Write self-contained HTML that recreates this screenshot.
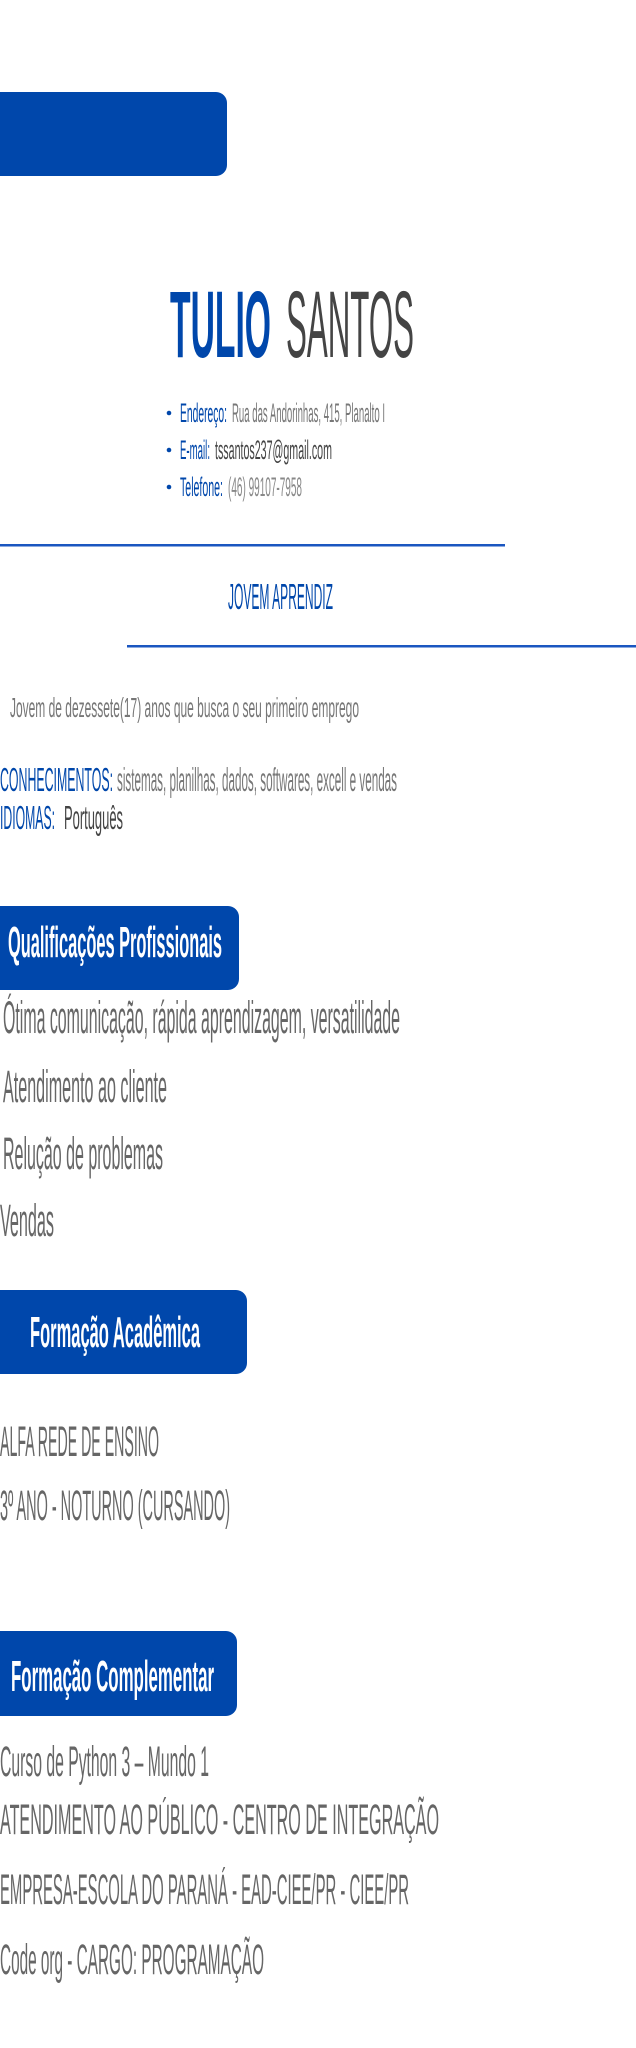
<!DOCTYPE html>
<html><head><meta charset="utf-8"><style>
html,body{margin:0;padding:0;background:#fff;}
svg{display:block;}
text{font-family:"Liberation Sans",sans-serif;}
</style></head><body>
<svg width="636" height="2048" viewBox="0 0 636 2048" xmlns="http://www.w3.org/2000/svg">
<rect width="636" height="2048" fill="#fff"/>
<path d="M0 92 H216 a11 11 0 0 1 11 11 V165 a11 11 0 0 1 -11 11 H0 Z" fill="#0047AB"/>
<text x="170" y="357" font-size="95" font-weight="bold" fill="#0047AB" textLength="101" lengthAdjust="spacingAndGlyphs">TULIO</text>
<text x="286" y="357" font-size="95" fill="#444" textLength="128" lengthAdjust="spacingAndGlyphs">SANTOS</text>
<circle cx="169" cy="413" r="2.3" fill="#0047AB"/>
<circle cx="169" cy="450" r="2.3" fill="#0047AB"/>
<circle cx="169" cy="487" r="2.3" fill="#0047AB"/>
<text x="180" y="422" font-size="27" fill="#0047AB" textLength="47" lengthAdjust="spacingAndGlyphs">Endereço:</text>
<text x="232" y="422" font-size="27" fill="#777" textLength="153" lengthAdjust="spacingAndGlyphs">Rua das Andorinhas, 415, Planalto I</text>
<text x="180" y="459" font-size="27" fill="#0047AB" textLength="30" lengthAdjust="spacingAndGlyphs">E-mail:</text>
<text x="215" y="459" font-size="27" fill="#444" textLength="117" lengthAdjust="spacingAndGlyphs">tssantos237@gmail.com</text>
<text x="180" y="496" font-size="27" fill="#0047AB" textLength="43" lengthAdjust="spacingAndGlyphs">Telefone:</text>
<text x="228" y="496" font-size="27" fill="#888" textLength="74" lengthAdjust="spacingAndGlyphs">(46) 99107-7958</text>
<rect x="0" y="544" width="505" height="2.5" fill="#1a56c0"/>
<text x="228" y="609" font-size="36" fill="#0047AB" textLength="105" lengthAdjust="spacingAndGlyphs">JOVEM APRENDIZ</text>
<rect x="127" y="645" width="509" height="2.5" fill="#1a56c0"/>
<text x="10" y="717" font-size="28" fill="#777" textLength="349" lengthAdjust="spacingAndGlyphs">Jovem de dezessete(17)  anos que busca o seu primeiro emprego</text>
<text x="0" y="791" font-size="33" fill="#0047AB" textLength="113" lengthAdjust="spacingAndGlyphs">CONHECIMENTOS:</text>
<text x="117" y="791" font-size="33" fill="#777" textLength="280" lengthAdjust="spacingAndGlyphs">sistemas, planilhas, dados, softwares, excell e vendas</text>
<text x="0" y="829" font-size="33" fill="#0047AB" textLength="55" lengthAdjust="spacingAndGlyphs">IDIOMAS:</text>
<text x="64" y="829" font-size="33" fill="#444" textLength="59" lengthAdjust="spacingAndGlyphs">Português</text>
<path d="M0 906 H228 a11 11 0 0 1 11 11 V979 a11 11 0 0 1 -11 11 H0 Z" fill="#0047AB"/>
<text x="8" y="957" font-size="44" font-weight="bold" fill="#fff" textLength="214" lengthAdjust="spacingAndGlyphs">Qualificações Profissionais</text>
<g font-size="45" fill="#666">
<text x="3" y="1033" textLength="397" lengthAdjust="spacingAndGlyphs">Ótima comunicação, rápida aprendizagem, versatilidade</text>
<text x="3" y="1102" textLength="164" lengthAdjust="spacingAndGlyphs">Atendimento ao cliente</text>
<text x="3" y="1169" textLength="160" lengthAdjust="spacingAndGlyphs">Relução de problemas</text>
<text x="0" y="1236" textLength="54" lengthAdjust="spacingAndGlyphs">Vendas</text>
</g>
<path d="M0 1290 H236 a11 11 0 0 1 11 11 V1363 a11 11 0 0 1 -11 11 H0 Z" fill="#0047AB"/>
<text x="30" y="1347" font-size="44" font-weight="bold" fill="#fff" textLength="170" lengthAdjust="spacingAndGlyphs">Formação Acadêmica</text>
<g font-size="43" fill="#666">
<text x="0" y="1456" textLength="159" lengthAdjust="spacingAndGlyphs">ALFA REDE DE ENSINO</text>
<text x="0" y="1520" textLength="230" lengthAdjust="spacingAndGlyphs">3º ANO - NOTURNO (CURSANDO)</text>
</g>
<path d="M0 1631 H226 a11 11 0 0 1 11 11 V1705 a11 11 0 0 1 -11 11 H0 Z" fill="#0047AB"/>
<text x="11" y="1691" font-size="44" font-weight="bold" fill="#fff" textLength="203" lengthAdjust="spacingAndGlyphs">Formação Complementar</text>
<g font-size="43" fill="#666">
<text x="0" y="1776" textLength="209" lengthAdjust="spacingAndGlyphs">Curso de Python 3 – Mundo 1</text>
<text x="0" y="1834" textLength="439" lengthAdjust="spacingAndGlyphs">ATENDIMENTO  AO  PÚBLICO  -  CENTRO  DE  INTEGRAÇÃO</text>
<text x="0" y="1904" textLength="409" lengthAdjust="spacingAndGlyphs">EMPRESA-ESCOLA DO PARANÁ - EAD-CIEE/PR - CIEE/PR</text>
<text x="0" y="1974" textLength="264" lengthAdjust="spacingAndGlyphs">Code org - CARGO: PROGRAMAÇÃO</text>
</g>
</svg>
</body></html>
